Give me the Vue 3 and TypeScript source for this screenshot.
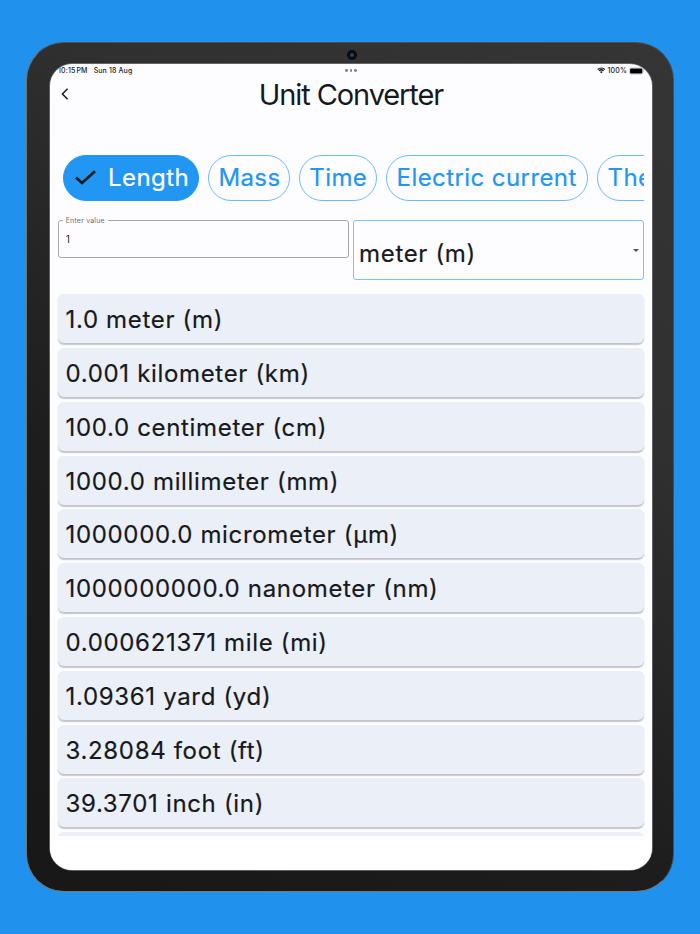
<script setup lang="ts">
import { ref } from 'vue'

interface Category {
  name: string
  width: number
}

const categories: Category[] = [
  { name: 'Length', width: 136 },
  { name: 'Mass', width: 81.6 },
  { name: 'Time', width: 78 },
  { name: 'Electric current', width: 201.7 },
  { name: 'Thermo', width: 110 },
]
const selected = ref('Length')
const value = ref('1')
const results: string[] = [
  '1.0 meter (m)',
  '0.001 kilometer (km)',
  '100.0 centimeter (cm)',
  '1000.0 millimeter (mm)',
  '1000000.0 micrometer (µm)',
  '1000000000.0 nanometer (nm)',
  '0.000621371 mile (mi)',
  '1.09361 yard (yd)',
  '3.28084 foot (ft)',
  '39.3701 inch (in)',
  '',
]
</script>

<template>
  <main class="stage">
    <div class="tablet">
      <span class="camera"><i></i></span>
      <div class="screen">
        <div class="status">
          <span class="clock">10:15<b>PM</b></span>
          <span class="date">Sun 18 Aug</span>
          <span class="dots"><i></i><i></i><i></i></span>
          <svg class="wifi" viewBox="0 0 16 12">
            <path d="M1.2 4.6a9.8 9.8 0 0 1 13.6 0M3.7 7.2a6.2 6.2 0 0 1 8.6 0" fill="none" stroke="#111" stroke-width="2.3" />
            <path d="M8 11.7 5.5 9.2a3.6 3.6 0 0 1 5 0z" fill="#111" />
          </svg>
          <span class="percent">100%</span>
          <svg class="battery" viewBox="0 0 16 8">
            <rect x="0.4" y="0.9" width="13.6" height="6.2" rx="1.8" fill="#fff" stroke="#aaa" stroke-width="0.6" />
            <rect x="1.1" y="1.5" width="12.2" height="5" rx="1.1" fill="#000" />
            <path d="M14.7 3.2a1 1 0 0 1 0 1.8z" fill="#aaa" />
          </svg>
        </div>

        <header class="bar">
          <svg class="back" viewBox="0 0 8 12"><path d="M6.6 0.8 1.4 6l5.2 5.2" fill="none" stroke="#17191c" stroke-width="1.5" /></svg>
          <h1>Unit Converter</h1>
        </header>

        <nav class="chips">
          <button
            v-for="c in categories"
            :key="c.name"
            class="chip"
            :class="{ active: c.name === selected }"
            :style="{ width: c.width + 'px' }"
            @click="selected = c.name"
          >
            <svg v-if="c.name === selected" class="check" viewBox="0 0 21 15">
              <path d="M1 7.4 7 13 20 1.2" fill="none" stroke="#17191c" stroke-width="2.7" />
            </svg>
            <span>{{ c.name }}</span>
          </button>
        </nav>

        <section class="inputs">
          <label class="field">
            <span class="legend">Enter value</span>
            <input v-model="value" />
          </label>
          <div class="select">
            <span>meter (m)</span>
            <svg class="caret" viewBox="0 0 6 3"><path d="M0 0h6L3 3z" fill="#505256" /></svg>
          </div>
        </section>

        <ul class="results">
          <li v-for="r in results" :key="r">{{ r }}</li>
        </ul>
        <div class="bottom"></div>
      </div>
    </div>
  </main>
</template>

<style>
body {
  margin: 0;
  background: #2092ed;
}
</style>

<style scoped>
* {
  box-sizing: border-box;
}
.stage {
  width: 700px;
  height: 934px;
  padding: 42px 25px 0 26.4px;
  overflow: hidden;
  background: #2092ed;
  font-family: Inter, 'Liberation Sans', sans-serif;
  color: #17191c;
}
.tablet {
  position: relative;
  width: 648px;
  height: 849.5px;
  padding: 20.6px 21.2px 20.6px 22.3px;
  border: 1px solid #5c5c5e;
  border-color: #4c5055 #35516c #7b7773 #77706b;
  border-radius: 38px;
  background: linear-gradient(35deg, #181818 5%, #1d1d1d 35%, #303030 68%, #353535);
}
.camera {
  position: absolute;
  top: 6.5px;
  left: 319.2px;
  width: 10px;
  height: 10px;
  border-radius: 50%;
  background: #0b0c0e;
  display: grid;
  place-items: center;
}
.camera i {
  width: 4px;
  height: 4px;
  border-radius: 50%;
  background: #28445f;
}
.screen {
  width: 602.5px;
  height: 806.4px;
  display: flex;
  flex-direction: column;
  overflow: hidden;
  border-radius: 22px;
  background: #fdfdff;
  box-shadow: 0 0 0 0.7px #77777a;
}
.status {
  position: relative;
  flex: none;
  height: 13px;
  padding: 1px 7px 0 8.3px;
  display: flex;
  align-items: center;
  font-size: 7px;
  font-weight: 500;
  line-height: 12px;
  white-space: nowrap;
}
.clock {
  letter-spacing: 0.14px;
}
.clock b {
  font-weight: 500;
  margin-left: 1px;
}
.date {
  margin-left: 6px;
  letter-spacing: 0.12px;
}
.dots {
  position: absolute;
  left: 295.2px;
  top: 5.3px;
  display: flex;
  gap: 2px;
}
.dots i {
  width: 2.8px;
  height: 2.8px;
  border-radius: 50%;
  background: #858588;
}
.wifi {
  width: 8.6px;
  height: 6.4px;
  margin-left: auto;
}
.percent {
  margin-left: 1.6px;
  letter-spacing: 0.16px;
}
.battery {
  width: 16px;
  height: 8px;
  margin-left: 2.2px;
}
.bar {
  flex: none;
  height: 78px;
  display: grid;
  grid-template-columns: 31px 1fr 31px;
  align-items: start;
}
.back {
  width: 8px;
  height: 12px;
  margin: 11.3px 0 0 11px;
}
h1 {
  margin: 0;
  font-size: 29px;
  line-height: 35px;
  font-weight: 400;
  letter-spacing: -1.1px;
  text-align: center;
  color: #17191c;
}
.chips {
  flex: none;
  height: 46px;
  margin: 0 8px 0 8px;
  padding-left: 5.1px;
  display: flex;
  gap: 9.3px;
  overflow: hidden;
}
.chip {
  flex: none;
  height: 46px;
  padding: 0 0 0 9.3px;
  border: 1px solid #6dbaf9;
  border-radius: 23px;
  background: #fdfdff;
  color: #2196f3;
  font: 400 24px/46px Inter, 'Liberation Sans', sans-serif;
  -webkit-text-stroke: 0.2px currentColor;
  letter-spacing: 0.42px;
  text-align: left;
  white-space: nowrap;
  display: flex;
  align-items: center;
}
.chip.active {
  border-color: #2196f3;
  background: #2196f3;
  color: #fff;
}
.check {
  width: 21px;
  height: 15px;
  margin: 0 12px 0 2px;
}
.inputs {
  flex: none;
  height: 61px;
  margin: 19px 8px 0;
  display: grid;
  grid-template-columns: 291px 291px;
  gap: 4.4px;
  align-items: start;
}
.field {
  position: relative;
  height: 38px;
  border: 1px solid #a6a6a9;
  border-radius: 3px;
  display: flex;
}
.legend {
  position: absolute;
  top: -5px;
  left: 4px;
  padding: 0 3px;
  background: #fdfdff;
  color: #6c6c70;
  font-size: 7px;
  line-height: 10px;
  letter-spacing: 0.2px;
}
.field input {
  width: 100%;
  padding: 0 7px;
  border: 0;
  background: none;
  outline: none;
  color: #26282c;
  font: 400 10px Inter, 'Liberation Sans', sans-serif;
}
.select {
  height: 60.6px;
  padding: 7.4px 4px 0 5px;
  border: 1px solid #7cc0fb;
  border-radius: 3px;
  display: flex;
  align-items: center;
  justify-content: space-between;
  font-size: 24px;
  font-weight: 400;
  -webkit-text-stroke: 0.2px currentColor;
  letter-spacing: 0.65px;
}
.caret {
  width: 6px;
  height: 3px;
  margin-top: -7px;
}
.results {
  flex: none;
  height: 555px;
  margin: 0;
  padding: 13.6px 8px 0;
  overflow: hidden;
  list-style: none;
}
.results li {
  height: 49px;
  margin-bottom: 4.8px;
  padding-left: 7.8px;
  border-radius: 6px;
  background: #ebeff7;
  box-shadow: 0 1.2px 1.2px #c4c4cb;
  font-size: 24px;
  font-weight: 400;
  -webkit-text-stroke: 0.2px currentColor;
  line-height: 51.6px;
  letter-spacing: 0.67px;
  white-space: nowrap;
}
.bottom {
  flex: 1;
  margin-top: 5px;
  background: #fff;
}
</style>
